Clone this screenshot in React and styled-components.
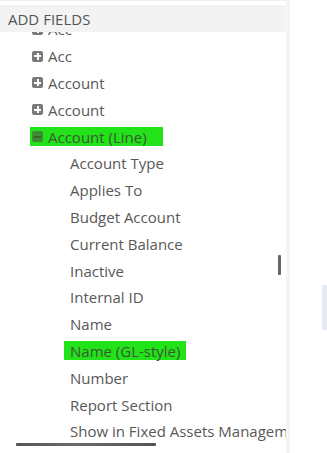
import styled, { createGlobalStyle } from "styled-components";

const GlobalStyle = createGlobalStyle`
  html, body {
    margin: 0;
    padding: 0;
    background: #fff;
  }
  body {
    font-family: "Open Sans", "Liberation Sans", sans-serif;
  }
`;

const Page = styled.div`
  display: flex;
  width: 327px;
  height: 453px;
  overflow: hidden;
`;

const Panel = styled.div`
  position: relative;
  width: 286px;
  flex-shrink: 0;
  display: flex;
  flex-direction: column;
  padding-top: 4px;
  border-top: 1px solid #f0f0f0;
  box-sizing: border-box;
`;

const Header = styled.div`
  height: 27px;
  background: #f3f3f3;
  padding-left: 8px;
  display: flex;
  align-items: center;
  font-size: 15px;
  color: #555;
  text-transform: uppercase;
  position: relative;
  z-index: 1;
`;

const ListBox = styled.div`
  flex: 1;
  overflow: hidden;
`;

const List = styled.div`
  margin-top: -16px;
  white-space: nowrap;
`;

const Row = styled.div`
  height: 26.8px;
  display: flex;
  align-items: center;
  padding-left: ${(p) => (p.child ? 64 : 30)}px;
  font-size: 15px;
  color: #585858;
`;

const Label = styled.span`
  display: inline-flex;
  align-items: center;
  gap: 5px;
  height: 19px;
  padding: 0 ${(p) => p.padRight ?? 6}px 0 ${(p) => p.padLeft ?? 6}px;
  background: ${(p) => (p.hl ? "#22e21a" : "transparent")};
  color: ${(p) => (p.hl ? "#3b5a32" : "#585858")};
`;

const Toggle = styled.span`
  width: 11px;
  height: 11px;
  border-radius: 2px;
  background: ${(p) => (p.hl ? "#3f8a33" : "#7a7a7a")};
  position: relative;
  flex-shrink: 0;
  &::before {
    content: "";
    position: absolute;
    left: 2px;
    right: 2px;
    top: 4.5px;
    height: 2px;
    background: ${(p) => (p.hl ? "#2f6a26" : "#fff")};
  }
  &::after {
    content: "";
    display: ${(p) => (p.open ? "none" : "block")};
    position: absolute;
    top: 2px;
    bottom: 2px;
    left: 4.5px;
    width: 2px;
    background: #fff;
  }
`;

const VThumb = styled.div`
  position: absolute;
  right: 5px;
  top: 254px;
  width: 3px;
  height: 20px;
  background: #666;
  border-radius: 1px;
`;

const HThumb = styled.div`
  position: absolute;
  left: 16px;
  top: 442px;
  width: 140px;
  height: 3px;
  background: linear-gradient(90deg, #555 0%, #6a6a6a 40%, #555 100%);
  border-radius: 1px;
`;

const Divider = styled.div`
  width: 4px;
  flex-shrink: 0;
  background: #f5f5f5;
`;

const Side = styled.div`
  flex: 1;
  display: flex;
  justify-content: flex-end;
  padding-top: 285px;
`;

const SideBlock = styled.div`
  width: 5px;
  height: 45px;
  background: #e6eaf3;
`;

const parents = [
  { name: "Acc" },
  { name: "Acc" },
  { name: "Account" },
  { name: "Account" },
  { name: "Account (Line)", open: true, hl: true },
];

const children = [
  "Account Type",
  "Applies To",
  "Budget Account",
  "Current Balance",
  "Inactive",
  "Internal ID",
  "Name",
  "Name (GL-style)",
  "Number",
  "Report Section",
  "Show in Fixed Assets Management",
];

const App = () => {
  return (
    <Page>
      <GlobalStyle />
      <Panel>
        <Header>Add Fields</Header>
        <ListBox>
          <List>
            {parents.map((p, i) => (
              <Row key={"p" + i}>
                <Label hl={p.hl} padLeft={2} padRight={p.hl ? 16 : 2}>
                  <Toggle open={p.open} hl={p.hl} />
                  {p.name}
                </Label>
              </Row>
            ))}
            {children.map((c) => (
              <Row child key={c}>
                <Label hl={c === "Name (GL-style)"}>{c}</Label>
              </Row>
            ))}
          </List>
        </ListBox>
        <VThumb />
        <HThumb />
      </Panel>
      <Divider />
      <Side>
        <SideBlock />
      </Side>
    </Page>
  );
};

export default App;
